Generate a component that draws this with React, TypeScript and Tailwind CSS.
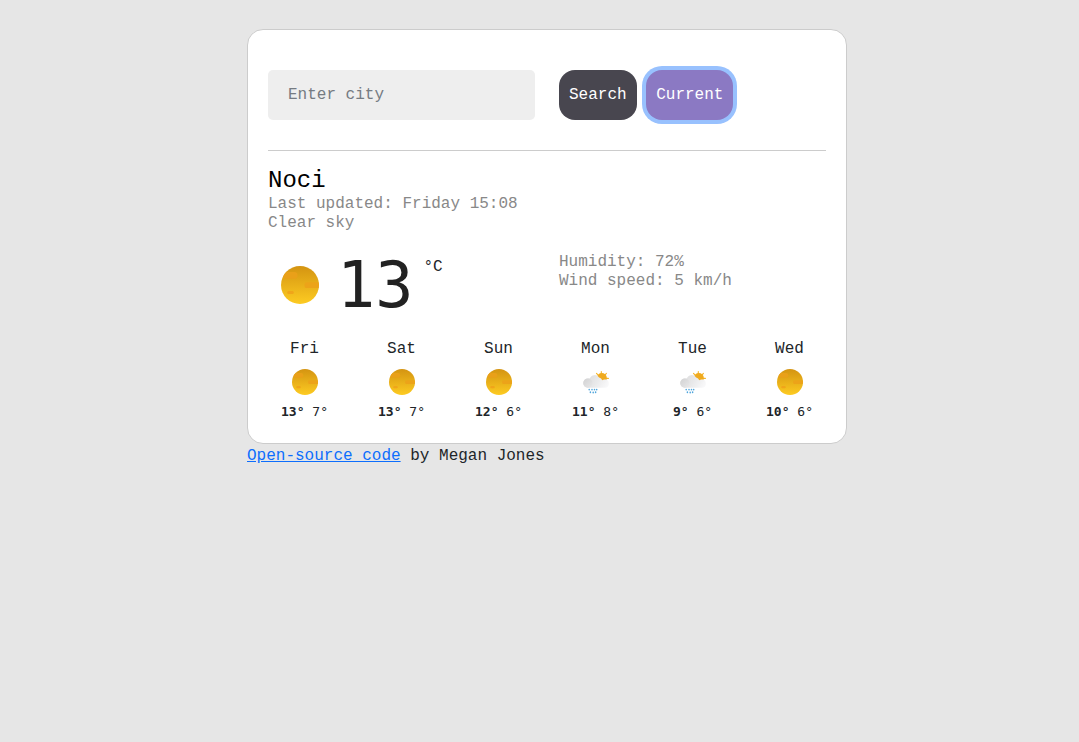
import React from "react";

type Condition = "clear" | "rain";

interface Day {
  name: string;
  condition: Condition;
  max: number;
  min: number;
}

const days: Day[] = [
  { name: "Fri", condition: "clear", max: 13, min: 7 },
  { name: "Sat", condition: "clear", max: 13, min: 7 },
  { name: "Sun", condition: "clear", max: 12, min: 6 },
  { name: "Mon", condition: "rain", max: 11, min: 8 },
  { name: "Tue", condition: "rain", max: 9, min: 6 },
  { name: "Wed", condition: "clear", max: 10, min: 6 },
];

function ClearIcon({ id, className }: { id: string; className: string }) {
  return (
    <svg viewBox="0 0 38 38" className={className} aria-hidden="true">
      <defs>
        <linearGradient id={id} x1="0" y1="0" x2="0" y2="1">
          <stop offset="0" stopColor="#d49411" />
          <stop offset="1" stopColor="#fdcb22" />
        </linearGradient>
        <clipPath id={id + "-clip"}>
          <circle cx="19" cy="19" r="19" />
        </clipPath>
      </defs>
      <circle cx="19" cy="19" r="19" fill={`url(#${id})`} />
      <g clipPath={`url(#${id}-clip)`}>
        <rect x="2" y="6" width="14.5" height="6.8" rx="3.2" fill="#e9a019" />
        <rect x="23.5" y="16.3" width="18" height="5.8" rx="2.2" fill="#eca319" />
        <rect x="6.2" y="25" width="6.6" height="3" rx="1.5" fill="#f0a51a" />
      </g>
    </svg>
  );
}

function RainIcon({ id, className }: { id: string; className: string }) {
  return (
    <svg viewBox="0 0 26 26" className={className} aria-hidden="true">
      <defs>
        <linearGradient id={id} x1="0" y1="0.3" x2="1" y2="0.6">
          <stop offset="0" stopColor="#dadadb" />
          <stop offset="0.5" stopColor="#e8e8e9" />
          <stop offset="1" stopColor="#f8f8f9" />
        </linearGradient>
        <linearGradient id={id + "-puff"} x1="0" y1="0" x2="1" y2="1">
          <stop offset="0" stopColor="#d2d2d3" />
          <stop offset="1" stopColor="#e8e8e9" />
        </linearGradient>
      </defs>
      <g stroke="#f6b526" strokeWidth="1.1" strokeLinecap="round">
        <path d="M18.3 2.6v2M13.5 4.3l1.2 1.4M23.4 4.4l-1.2 1.4M23.4 9.4h2" />
      </g>
      <circle cx="18.8" cy="9" r="5" fill="#efaa1f" />
      <path
        d="M4.6 18.7a4.5 4.5 0 0 1 .5-9.2h1.7a5.2 5.2 0 0 1 9.3-.9 4.4 4.4 0 0 1 3.2 2.6 4 4 0 0 1 3.3-.6 4.2 4.2 0 0 1 3.2 4.4c0 2.3-1.8 3.7-3.9 3.7Z"
        fill={`url(#${id})`}
      />
      <circle cx="4.9" cy="14.1" r="4.6" fill={`url(#${id}-puff)`} />
      <g stroke="#4fa5dc" strokeWidth="1.5" strokeLinecap="round">
        <path d="M6.2 20.4v.4M9 20.4v.4M11.5 20.4v.4M13.7 20.4v.4M7.4 23v.5M10.2 23.2v.5M12.6 23v.4" />
      </g>
    </svg>
  );
}

export default function App() {
  return (
    <div className="min-h-screen bg-[#e6e6e6] pt-[29px] pl-[247px] font-['Liberation_Mono',monospace] text-[16px] leading-[19.2px] text-[#212529]">
      <main className="h-[415px] w-[600px] rounded-[16px] border border-[#cccccc] bg-white px-5 pt-10">
        <form className="flex h-[50px]" onSubmit={(e) => e.preventDefault()}>
          <input
            type="text"
            placeholder="Enter city"
            className="mr-6 h-[50px] w-[267px] rounded-[5px] bg-[#eeeeee] px-5 outline-none placeholder:text-[#757b82]"
          />
          <button type="submit" className="mr-[9.6px] h-[50px] w-[77.6px] rounded-[16px] bg-[#48464f] pt-[2px] text-white">
            Search
          </button>
          <button type="button" className="h-[50px] w-[87.2px] rounded-[16px] bg-[#8b79c3] pt-[2px] text-white shadow-[0_0_0_4px_#98c1fe]">
            Current
          </button>
        </form>
        <hr className="mt-[30px] border-[#cccccc]" />

        <h1 className="mt-[16px] text-[24px] leading-[28.8px] text-black">Noci</h1>
        <ul className="-mt-px text-[#888888]">
          <li>Last updated: Friday 15:08</li>
          <li>Clear sky</li>
        </ul>

        <section className="mt-[20px] flex h-[77px]">
          <div className="flex w-[291px] pl-[13px]">
            <ClearIcon id="now" className="mt-[13px] h-[38px] w-[38px]" />
            <span className="ml-[18px] font-['DejaVu_Sans_Mono',monospace] text-[63.5px] leading-[64px] text-[#222222]">13</span>
            <span className="ml-[10px] pt-[5px]">°C</span>
          </div>
          <ul className="text-[#888888]">
            <li>Humidity: 72%</li>
            <li>Wind speed: 5 km/h</li>
          </ul>
        </section>

        <section className="-mx-3 mt-[10px] grid grid-cols-6">
          {days.map((day) => (
            <div key={day.name} className="flex flex-col items-center">
              <div>{day.name}</div>
              {day.condition === "clear" ? (
                <ClearIcon id={day.name} className="mt-[10px] h-[26px] w-[26px]" />
              ) : (
                <RainIcon id={day.name} className="mt-[10px] h-[26px] w-[26px]" />
              )}
              <div className="mt-[9px] font-['DejaVu_Sans_Mono',monospace] text-[13px] leading-[16px]">
                <strong>{day.max}°</strong> {day.min}°
              </div>
            </div>
          ))}
        </section>
      </main>
      <footer className="mt-[3px]">
        <a href="#" className="text-[#0d6efd] underline">Open-source code</a> by Megan Jones
      </footer>
    </div>
  );
}
